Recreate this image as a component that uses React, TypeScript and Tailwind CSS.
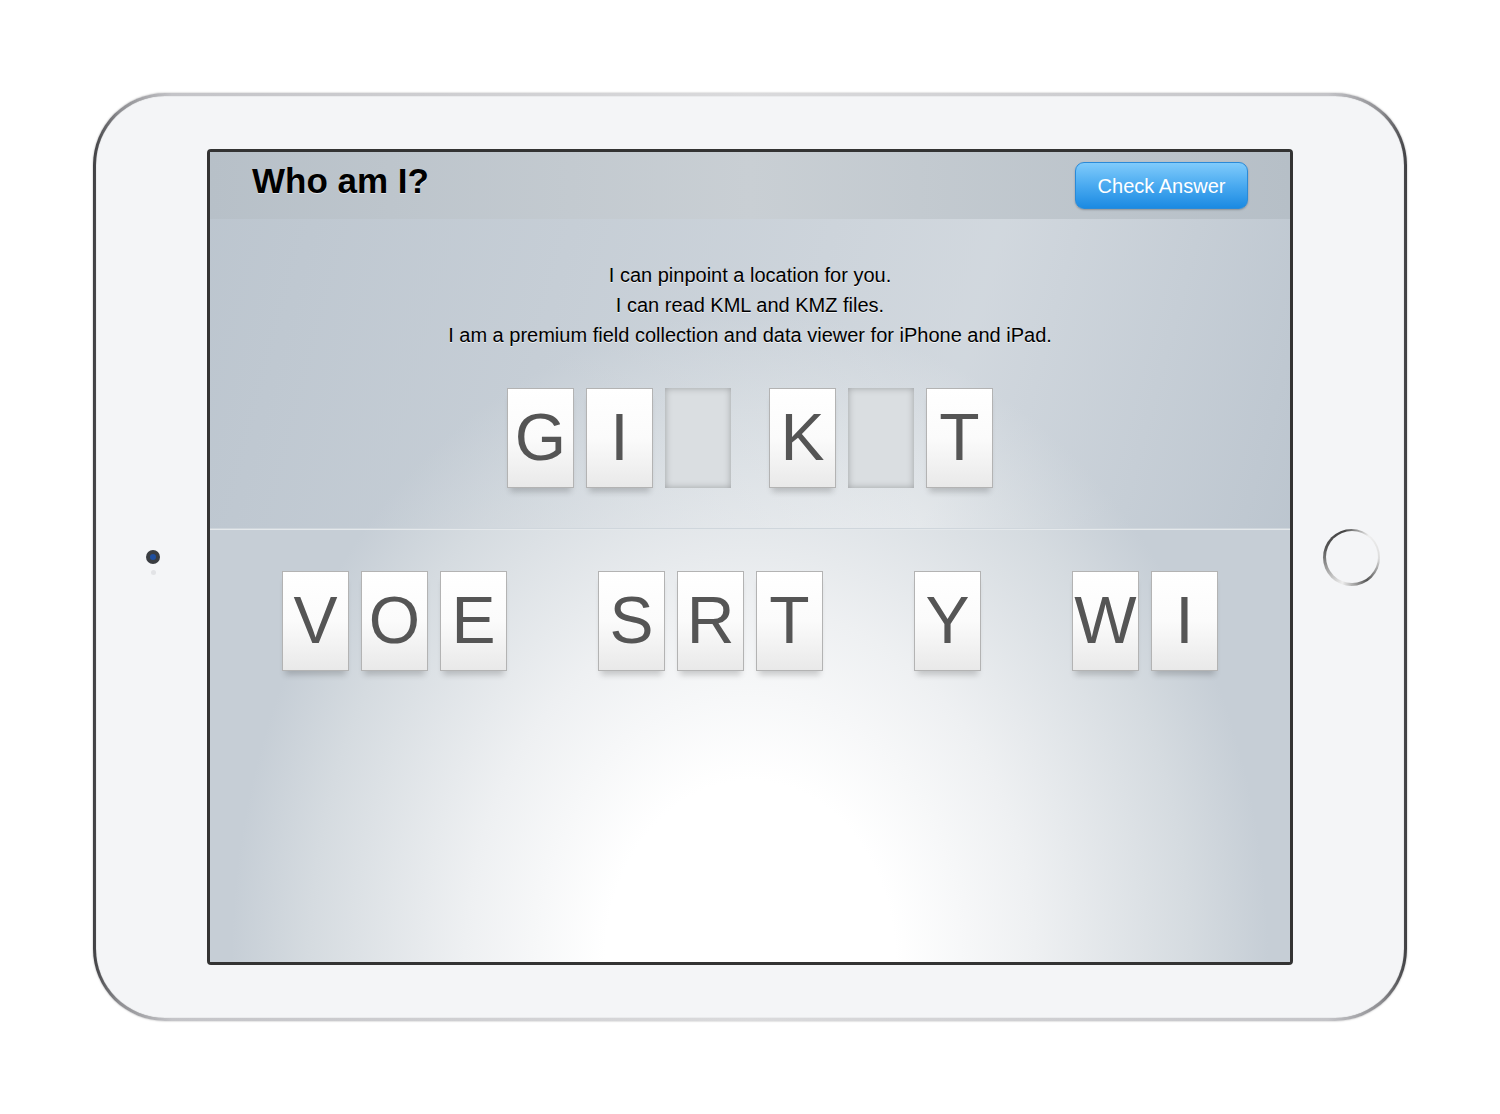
import React from "react";

const clues = [
  "I can pinpoint a location for you.",
  "I can read KML and KMZ files.",
  "I am a premium field collection and data viewer for iPhone and iPad.",
];

// null = empty slot still to be filled
const answer: (string | null)[][] = [
  ["G", "I", null],
  ["K", null, "T"],
];

const pool: string[][] = [["V", "O", "E"], ["S", "R", "T"], ["Y"], ["W", "I"]];

function Tile({ letter }: { letter: string | null }) {
  if (letter === null) {
    return (
      <div className="h-[100px] w-[66px] bg-[#dadee1] shadow-[inset_0_0_7px_rgba(0,0,0,0.28)]" />
    );
  }
  return (
    <div className="flex h-[100px] w-[67px] items-center justify-center border border-[#b3b3b3] bg-[linear-gradient(180deg,#ffffff_0%,#fbfbfb_50%,#e9e9e9_100%)] text-[66px] leading-none text-[#555] shadow-[0_7px_6px_-3px_rgba(0,0,0,0.18)] font-['Liberation_Sans',Arial,sans-serif]">
      <span className="-mt-[2px]">{letter}</span>
    </div>
  );
}

export default function App() {
  return (
    <div className="min-h-[1114px] w-[1500px] bg-white pt-[93px] font-['Liberation_Sans',Arial,sans-serif]">
      <div className="mx-auto h-[928px] w-[1314px] rounded-[72px] bg-[linear-gradient(90deg,#3f3f42_0%,#8e8e92_2%,#c4c4c8_6%,#dadadc_50%,#c4c4c8_94%,#8e8e92_98%,#3f3f42_100%)] p-[3px] shadow-[0_0_2px_rgba(0,0,0,0.35)]">
        <div className="grid h-full w-full grid-cols-[111px_1086px_111px] items-center rounded-[69px] bg-[#f4f5f7] shadow-[inset_0_0_1px_rgba(0,0,0,0.4)]">
          <div className="flex justify-center pl-[3px]">
            <div className="relative">
              <div className="flex h-[14px] w-[14px] items-center justify-center rounded-full bg-[#3a3d42]">
                <div className="h-[6px] w-[6px] rounded-full bg-[#1f4fa0]" />
              </div>
              <div className="absolute left-[5px] top-[20px] h-[5px] w-[5px] rounded-full bg-[#e2e3e6]" />
            </div>
          </div>

          <div className="h-[816px] w-[1086px] overflow-hidden rounded-[4px] border-[3px] border-[#333]">
            <div className="flex h-full flex-col bg-[radial-gradient(ellipse_48%_80%_at_50%_100%,#ffffff_0%,#ffffff_28%,#eef0f2_55%,#d5dbe0_85%,#c6ced6_100%)]">
              <div className="flex h-[67px] shrink-0 items-start justify-between bg-[linear-gradient(90deg,#b7c0c8_0%,#c9cfd4_50%,#b6bfc7_100%)] pl-[42px] pr-[42px]">
                <h1 className="mt-[11px] text-[35px] font-bold leading-none text-black [text-shadow:0_1px_0_rgba(255,255,255,0.6)]">
                  Who am I?
                </h1>
                <button className="mt-[10px] h-[47px] w-[173px] rounded-[9px] border border-[#2a8ad8] bg-[linear-gradient(180deg,#80cbfb_0%,#4aaaf0_50%,#1b8ae2_100%)] text-[20px] text-white shadow-[0_1px_2px_rgba(0,0,0,0.25)]">
                  Check Answer
                </button>
              </div>

              <div className="flex h-[311px] shrink-0 flex-col items-center border-b border-[#e4e8eb] bg-[linear-gradient(105deg,rgba(170,182,194,0.35)_0%,rgba(255,255,255,0.2)_68%,rgba(170,182,194,0.35)_100%)] pt-[41px] shadow-[0_-1px_0_#cfd6dc_inset]">
                <div className="text-center text-[20px] leading-[30px] text-black [text-shadow:0_1px_0_rgba(255,255,255,0.7)]">
                  {clues.map((c) => (
                    <p key={c}>{c}</p>
                  ))}
                </div>
                <div className="mt-[38px] flex gap-[38px]">
                  {answer.map((word, i) => (
                    <div key={i} className="flex gap-[12px]">
                      {word.map((l, j) => (
                        <Tile key={j} letter={l} />
                      ))}
                    </div>
                  ))}
                </div>
              </div>

              <div className="flex justify-center gap-[91px] pt-[41px]">
                {pool.map((word, i) => (
                  <div key={i} className="flex gap-[12px]">
                    {word.map((l, j) => (
                      <Tile key={j} letter={l} />
                    ))}
                  </div>
                ))}
              </div>
            </div>
          </div>

          <div className="flex justify-center pl-[6px]">
            <div className="h-[57px] w-[57px] rounded-full bg-[conic-gradient(from_200deg,#eee,#555_25%,#444_40%,#eee_55%,#ddd_70%,#555_85%,#eee)] p-[2.5px]">
              <div className="h-full w-full rounded-full bg-[#f4f5f7]" />
            </div>
          </div>
        </div>
      </div>
    </div>
  );
}
